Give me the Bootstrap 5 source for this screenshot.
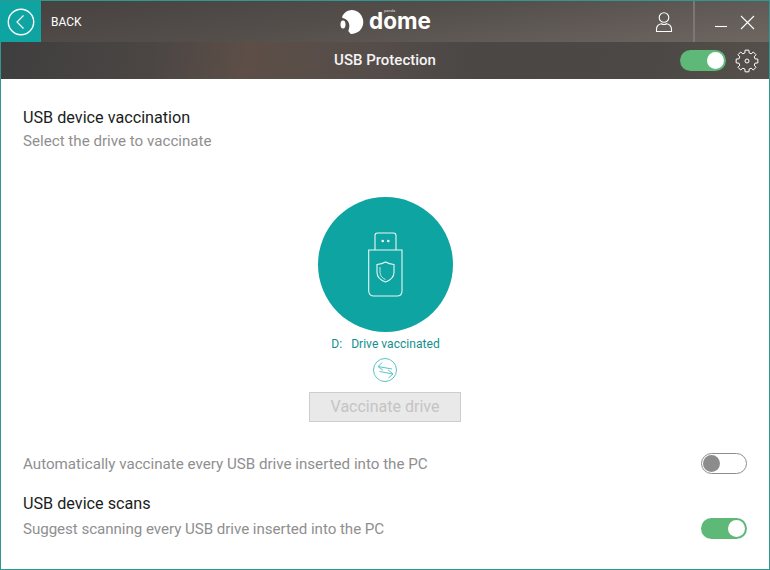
<!DOCTYPE html>
<html lang="en">
<head>
  <meta charset="UTF-8" />
  <meta name="viewport" content="width=device-width, initial-scale=1" />
  <title>USB Protection</title>
  <link href="https://cdn.jsdelivr.net/npm/bootstrap@5.3.2/dist/css/bootstrap.min.css" rel="stylesheet" />
  <style>
    html, body { height: 100%; }
    body { font-family: Roboto, "Liberation Sans", sans-serif; background: #fff; overflow: hidden; }
    .app-window { width: 770px; height: 570px; border: 1px solid #2f9893; background: #fff; }
    .top-bar { height: 41px; background: linear-gradient(172deg, #45413f 0%, #544e4b 45%, #6d6661 100%); }
    .back-btn { width: 41px; height: 41px; background: #0ea4a2; margin-left: -1px; }
    .back-label { font-size: 12px; color: #fff; margin-left: 10px; }
    .logo-box { position: absolute; left: 339px; top: 8px; height: 26px; }
    .logo-word { font-family: Inter, sans-serif; font-weight: 700; font-size: 22.5px; line-height: 14px; color: #fff; margin-left: 5px; position: relative; top: -1px; }
    .logo-small { position: absolute; left: 44px; top: -1px; font-size: 4px; line-height: 5px; color: #ddd; }
    .user-ico { margin-right: 20px; }
    .win-sep { width: 2px; height: 41px; background: #7d7773; }
    .sub-bar { height: 37px; background: linear-gradient(100deg, #3f3e3e 0%, #4b4644 20%, #5d4e47 32%, #554d49 48%, #4a4745 62%, #4c4845 85%, #55504b 100%); color: #fff; }
    .sub-title { font-size: 15px; font-weight: 500; color: #f4f4f4; }
    .sub-center { left: 0; right: 0; top: 0; bottom: 0; }
    .sw-track { width: 46px; height: 21px; border-radius: 11px; display: block; position: relative; }
    .sw-on { background: #5eb878; }
    .sw-on::after { content: ""; position: absolute; right: 2px; top: 2px; width: 17px; height: 17px; border-radius: 50%; background: #fff; }
    .sw-off { background: #fff; border: 1px solid #8d8d8d; }
    .sw-off::after { content: ""; position: absolute; left: 1px; top: 1px; width: 17px; height: 17px; border-radius: 50%; background: #8c8c8c; }
    .gear-ico { margin: 0 10px 0 9px; }
    .pane { padding: 0 22px; height: 490px; }
    .head-txt { font-size: 16.2px; font-weight: 400; line-height: 20px; color: #1a1d20; margin: 0; }
    .first-head { margin-top: 29px; }
    .scan-head { margin-top: 20px; }
    .sub-txt { font-size: 15.15px; line-height: 20px; color: #8f8f8f; margin: 0; }
    .select-txt { margin-top: 3px; }
    .suggest-txt { letter-spacing: -.055px; }
    .suggest-row { margin-top: 4px; margin-bottom: 30px; }
    .drive-circle { width: 135px; height: 135px; border-radius: 50%; background: #0ea4a2; margin-top: 46px; }
    .drive-label { font-size: 12.1px; line-height: 16px; color: #14908e; margin-top: 4px; padding-left: 1px; }
    .drive-letter { margin-right: 6px; }
    .swap-ico { margin-top: 5px; }
    .vacc-btn { width: 152px; height: 30px; border: 1px solid #cdcdcd; border-radius: 0; background: #e9e9e9; color: #c4c4c4; font-size: 16px; line-height: 28px; padding: 0; margin-top: 9px; }
    .vacc-btn:disabled { opacity: 1; border-color: #cdcdcd; background: #e9e9e9; color: #c4c4c4; }
  </style>
</head>
<body>
  <div class="app-window d-flex flex-column position-relative">
    <!-- barra superior -->
    <div class="top-bar d-flex align-items-center position-relative">
      <div class="back-btn d-flex align-items-center justify-content-center">
        <svg width="28" height="28" viewBox="0 0 28 28" fill="none" stroke="#fff">
          <circle cx="14" cy="14" r="12.7" stroke-width="1.4"/>
          <path d="M16.5 7.5 10 14l6.500 6.500" stroke-width="1.2"/>
        </svg>
      </div>
      <span class="back-label">BACK</span>
      <div class="logo-box d-flex align-items-center">
        <svg width="24" height="26" viewBox="0 0 24 26" fill="#fff">
          <path d="M2.3 7C4.500 3 8 1 11.700 1 18 1 23.300 6.500 23.300 13 23.300 20 18 25 10.700 25L8.300 22C9 20 9.500 18 9.300 16 9 12 6 9.500 2.300 9Z"/>
          <ellipse cx="3" cy="15.500" rx="2.500" ry="4"/>
        </svg>
        <span class="logo-word">dome</span>
        <span class="logo-small">panda</span>
      </div>
      <div class="ms-auto d-flex align-items-center">
        <svg width="18" height="22" viewBox="0 0 18 22" fill="none" stroke="#fff" stroke-width="1.1" class="user-ico">
          <circle cx="9" cy="6.500" r="4.800"/>
          <path d="M1.500 20.500v-2.200c0-3.200 2.600-5.200 5-5.600 1.500 1 3.500 1 5 0 2.400.4 5 2.400 5 5.600v2.200Z"/>
        </svg>
        <div class="win-sep"></div>
        <svg width="74" height="41" viewBox="0 0 74 41" fill="none" stroke="#fff" stroke-width="1.1">
          <path d="M20 25.500h12"/>
          <path d="M46 15l13 13M59 15l-13 13"/>
        </svg>
      </div>
    </div>

    <!-- barra de titulo -->
    <div class="sub-bar d-flex align-items-center justify-content-end position-relative">
      <div class="sub-center position-absolute d-flex align-items-center justify-content-center">
        <span class="sub-title">USB Protection</span>
      </div>
      <span class="sw-track sw-on"></span>
      <svg width="24" height="24" viewBox="0 0 24 24" fill="none" stroke="#fff" stroke-width="1" stroke-linejoin="round" class="gear-ico position-relative">
        <path d="M10.090 1.170H13.910L14.150 3.980 16.150 4.810 18.310 2.990 21.010 5.690 19.190 7.850 20.020 9.850 22.830 10.090V13.910L20.020 14.150 19.190 16.150 21.010 18.310 18.310 21.010 16.150 19.190 14.150 20.020 13.910 22.830H10.090L9.850 20.020 7.850 19.190 5.690 21.010 2.990 18.310 4.810 16.150 3.980 14.150 1.170 13.910V10.090L3.980 9.850 4.810 7.850 2.990 5.690 5.690 2.990 7.850 4.810 9.850 3.980Z"/>
        <circle cx="12" cy="12" r="2"/>
      </svg>
    </div>

    <!-- contenido -->
    <div class="pane d-flex flex-column">
      <p class="head-txt first-head">USB device vaccination</p>
      <p class="sub-txt select-txt">Select the drive to vaccinate</p>

      <div class="d-flex flex-column align-items-center flex-grow-1">
        <div class="drive-circle d-flex align-items-center justify-content-center">
          <svg width="40" height="68" viewBox="0 0 40 68" fill="none" stroke="#e8f7f6" stroke-width="1.1">
            <path d="M10 19V4.500C10 3 11 2 12.500 2h16C30 2 31 3 31 4.500V19"/>
            <path d="M3.700 19H37v41c0 3-2 5-5 5H8.700c-3 0-5-2-5-5Z"/>
            <rect x="16.400" y="8.700" width="2.600" height="2.600" fill="#e8f7f6" stroke="none" rx="1.300"/>
            <rect x="22" y="8.700" width="2.600" height="2.600" fill="#e8f7f6" stroke="none" rx="1.300"/>
            <path d="M20.500 31c2.500 1.500 5 2.200 8.500 2.500v8c0 4.500-4 7.800-8.500 9.500-4.500-1.700-8.500-5-8.500-9.500v-8c3.500-.3 6-1 8.500-2.500Z"/>
            <path d="M15 36v5.500c0 3.200 2.500 5.800 5.500 7" stroke-width=".8"/>
          </svg>
        </div>
        <div class="drive-label"><span class="drive-letter">D:</span> Drive vaccinated</div>
        <svg class="swap-ico" width="26" height="26" viewBox="0 0 26 26" fill="none" stroke="#5cc3c6" stroke-width="1">
          <circle cx="13" cy="13" r="11.500"/>
          <path d="M6 9.500l14 2.500M10.300 5.500 6 9.500l4.800 3.700"/>
          <path d="M21 17 7.500 14.500M16 12.800l5 4.200-4.500 4"/>
        </svg>
        <button class="vacc-btn btn" disabled>Vaccinate drive</button>
      </div>

      <div class="d-flex align-items-center justify-content-between">
        <p class="sub-txt">Automatically vaccinate every USB drive inserted into the PC</p>
        <span class="sw-track sw-off"></span>
      </div>
      <p class="head-txt scan-head">USB device scans</p>
      <div class="suggest-row d-flex align-items-center justify-content-between">
        <p class="sub-txt suggest-txt">Suggest scanning every USB drive inserted into the PC</p>
        <span class="sw-track sw-on"></span>
      </div>
    </div>
  </div>

  <script src="https://cdn.jsdelivr.net/npm/bootstrap@5.3.2/dist/js/bootstrap.bundle.min.js"></script>
</body>
</html>
